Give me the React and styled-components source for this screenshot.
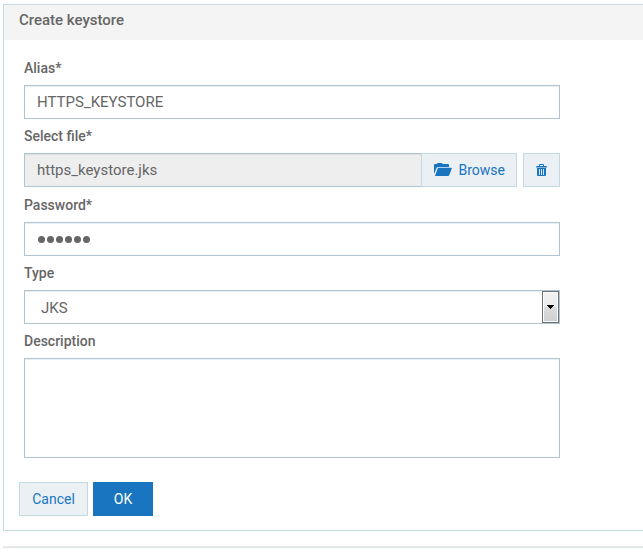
import React from "react";
import styled, { createGlobalStyle, css } from "styled-components";

const GlobalStyle = createGlobalStyle`
  * { box-sizing: border-box; }
  body {
    margin: 0;
    background: #fff;
    color: #666;
    font-family: Roboto, sans-serif;
    font-size: 14px;
    line-height: 20px;
    overflow: hidden;
  }
`;

const Page = styled.main`
  padding: 4px 0 0 3px;
`;

const Panel = styled.section`
  height: 527px;
  border: 1px solid #c5dce3;
  border-right: 0;
`;

const PanelHeader = styled.h1`
  height: 35px;
  margin: 0;
  padding: 5px 15px;
  background: #f4f4f4;
  font-size: 15px;
  line-height: 20px;
  font-weight: 500;
  color: #666;
`;

const Form = styled.form`
  display: flex;
  flex-direction: column;
  padding: 18px 0 0 20px;
`;

const Field = styled.div`
  display: flex;
  flex-direction: column;
  width: 536px;
  height: ${(p) => p.$height || 68}px;
`;

const Label = styled.label`
  height: 27px;
  flex: none;
  line-height: 21px;
  font-weight: 500;
`;

const control = css`
  border: 1px solid #b0c4d4;
  border-radius: 0;
  background: #fff;
  box-shadow: inset 0 1px 1px rgba(0, 0, 0, 0.075);
  color: #666;
  font: 15px/20px Roboto, sans-serif;
  outline: none;
`;

const Input = styled.input`
  ${control}
  width: 100%;
  height: 34px;
  padding: 0 12px 1px;
`;

const MaskedValue = styled.div`
  ${control}
  display: flex;
  align-items: center;
  gap: 2px;
  height: 34px;
  padding: 1px 13px 0;
`;

const Dot = styled.span`
  width: 7px;
  height: 7px;
  border-radius: 50%;
  background: #666;
`;

const FileRow = styled.div`
  display: flex;
  height: 34px;
`;

const FileName = styled(Input)`
  width: 397px;
  border-right: 0;
  background: #eee;
`;

const Button = styled.button`
  display: inline-flex;
  align-items: center;
  justify-content: center;
  flex: none;
  width: ${(p) => p.$width}px;
  height: 34px;
  padding: 0;
  border: 1px solid ${(p) => (p.$primary ? "#1a75c1" : "#c3dae4")};
  border-radius: 0;
  background: ${(p) => (p.$primary ? "#1a75c1" : "#ebf0f4")};
  color: ${(p) => (p.$primary ? "#fff" : "#1a75c1")};
  font: 14px/20px Roboto, sans-serif;
`;

const BrowseButton = styled(Button)`
  justify-content: flex-start;
  gap: 6.5px;
  padding-left: 12px;

  svg {
    margin-bottom: 1px;
  }
`;

const DeleteButton = styled(Button)`
  margin-left: 6px;
`;

const SelectBox = styled.div`
  ${control}
  display: flex;
  align-items: center;
  justify-content: space-between;
  height: 34px;
  padding-left: 16px;
`;

const SelectValue = styled.span`
  padding-top: 1px;
`;

const SelectArrow = styled.span`
  display: flex;
  align-items: center;
  justify-content: center;
  width: 17px;
  height: 32px;
  border: 1px solid #707070;
  background: linear-gradient(#f2f2f2 0%, #ebebeb 49%, #dddddd 50%, #cfcfcf 100%);
  box-shadow: inset 0 0 0 1px #fcfcfc;
`;

const TextArea = styled.textarea`
  ${control}
  display: block;
  height: 100px;
  resize: none;
`;

const Actions = styled.div`
  display: flex;
  gap: 5px;
  margin: 24px 0 0 -5px;
`;

const Rule = styled.hr`
  height: 2px;
  margin: 15px 0 0;
  border: 0;
  border-top: 1px solid #ebebeb;
  border-bottom: 1px solid #dfe6ea;
`;

const FolderIcon = () => (
  <svg width="18" height="13" viewBox="0 0 18 13" fill="currentColor" aria-hidden="true">
    <path d="M0 11V2Q0 1 1 1H3L3.4 0H8L8.5 1H14.3Q15 1 15 2V4H4Q3 4 2.6 5Z" />
    <path d="M1 13 3.7 5.5Q3.9 4.8 4.7 4.8H17.4Q18 4.8 17.8 5.5L15.2 12.3Q14.9 13 14.2 13Z" />
  </svg>
);

const TrashIcon = () => (
  <svg width="11" height="12" viewBox="0 0 11 12" fill="currentColor" aria-hidden="true">
    <path
      fillRule="evenodd"
      d="M3 2V1Q3 0 4 0h3q1 0 1 1v1h2q1 0 1 1v.5H0V3Q0 2 1 2ZM4 1V2h3V1ZM1 4h9v7q0 1-1 1H2Q1 12 1 11ZM3 5v6h.9V5Zm2.05 0v6h.9V5Zm2.05 0v6H8V5Z"
    />
  </svg>
);

const ArrowIcon = () => (
  <svg width="7" height="4" viewBox="0 0 7 4" shapeRendering="crispEdges" aria-hidden="true">
    <path d="M0 0h7v1H6v1H5v1H4v1H3V3H2V2H1V1H0Z" />
  </svg>
);

export default function App() {
  return (
    <>
      <GlobalStyle />
      <Page>
        <Panel>
          <PanelHeader>Create keystore</PanelHeader>
          <Form>
            <Field>
              <Label htmlFor="alias">Alias*</Label>
              <Input id="alias" defaultValue="HTTPS_KEYSTORE" />
            </Field>
            <Field $height={69}>
              <Label htmlFor="file">Select file*</Label>
              <FileRow>
                <FileName id="file" readOnly value="https_keystore.jks" />
                <BrowseButton type="button" $width={96}>
                  <FolderIcon />
                  Browse
                </BrowseButton>
                <DeleteButton type="button" $width={37} aria-label="Remove file">
                  <TrashIcon />
                </DeleteButton>
              </FileRow>
            </Field>
            <Field>
              <Label>Password*</Label>
              <MaskedValue>
                {Array.from({ length: 6 }, (_, i) => (
                  <Dot key={i} />
                ))}
              </MaskedValue>
            </Field>
            <Field>
              <Label>Type</Label>
              <SelectBox>
                <SelectValue>JKS</SelectValue>
                <SelectArrow>
                  <ArrowIcon />
                </SelectArrow>
              </SelectBox>
            </Field>
            <Field $height={127}>
              <Label htmlFor="description">Description</Label>
              <TextArea id="description" />
            </Field>
            <Actions>
              <Button type="button" $width={69}>Cancel</Button>
              <Button type="button" $primary $width={60}>OK</Button>
            </Actions>
          </Form>
        </Panel>
        <Rule />
      </Page>
    </>
  );
}
